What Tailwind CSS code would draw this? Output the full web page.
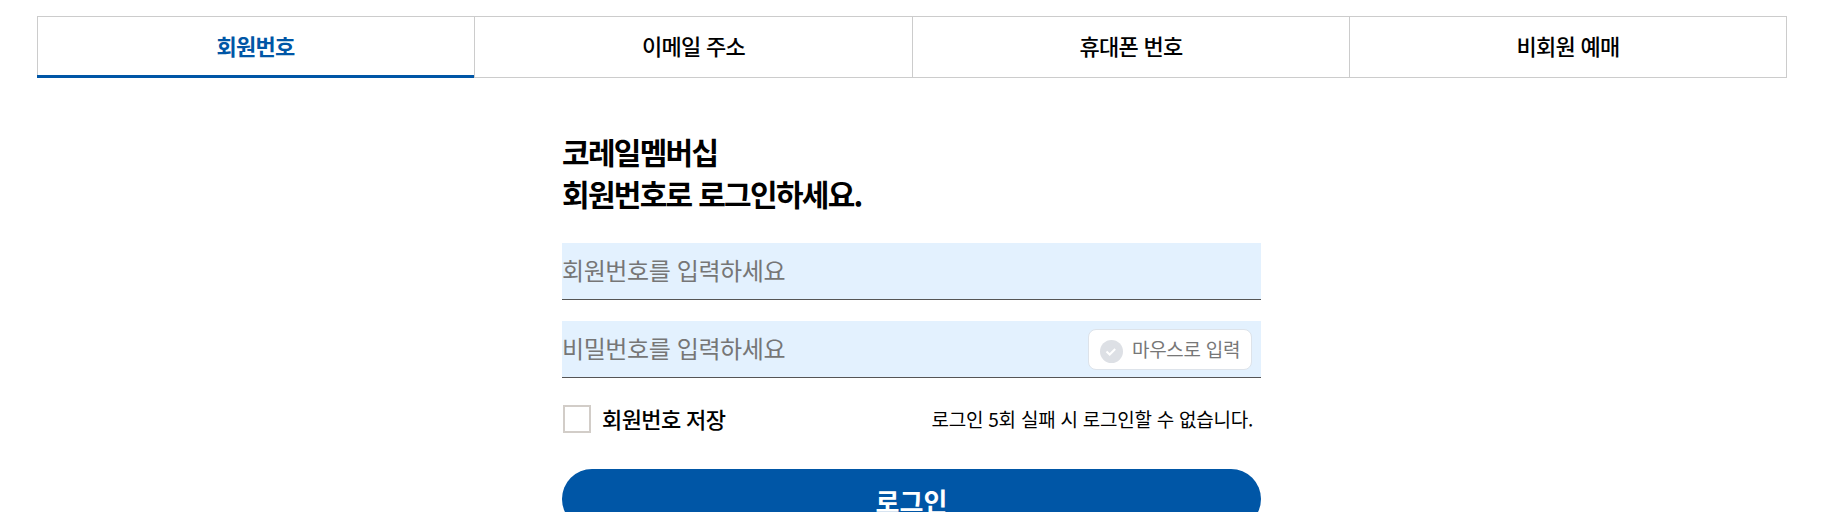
<!DOCTYPE html>
<html lang="ko">
  <head>
    <meta charset="UTF-8" />
    <title>로그인</title>
    <script src="https://cdn.jsdelivr.net/npm/@tailwindcss/browser@4"></script>
  </head>
  <body class="bg-white text-black font-['Noto_Sans_CJK_KR',sans-serif] overflow-hidden">
    <div class="w-[1829px] h-[512px] overflow-hidden pl-[37px] pr-[42px] pt-4">
      <!-- tabs -->
      <ul class="grid grid-cols-[436px_438px_437px_1fr] h-[62px] border border-[#cccccc] text-[22px] tracking-[-0.7px] font-medium">
        <li class="relative flex items-center justify-center pb-[4px] text-[#0056a6] font-bold -ml-px">
          회원번호
          <span class="absolute left-0 right-0 bottom-[-1px] h-[3px] bg-[#0056a6]"></span>
        </li>
        <li class="flex items-center justify-center pb-[4px] border-l border-[#cccccc]">이메일 주소</li>
        <li class="flex items-center justify-center pb-[4px] border-l border-[#cccccc]">휴대폰 번호</li>
        <li class="flex items-center justify-center pb-[4px] border-l border-[#cccccc]">비회원 예매</li>
      </ul>

      <!-- login form -->
      <div class="w-[699px] ml-[525px] mt-[52px]">
        <h2 class="text-[30px] leading-[42px] font-bold tracking-[-1.7px]">코레일멤버십<br />회원번호로 로그인하세요.</h2>

        <div class="mt-[29px] h-[57px] flex items-center pb-[3px] bg-[#e3f1fe] border-b border-[#555555] text-[24px] tracking-[-0.4px] text-[#767676]">
          회원번호를 입력하세요
        </div>

        <div class="mt-[21px] h-[57px] flex items-center justify-between pr-[9px] bg-[#e3f1fe] border-b border-[#555555] text-[24px] tracking-[-0.4px] text-[#767676]">
          <span class="pb-[3px]">비밀번호를 입력하세요</span>
          <button class="h-[41px] w-[164px] mt-px flex items-center gap-[9px] pl-[11px] bg-white border border-[#dde3ea] rounded-lg text-[19px] tracking-[-0.3px] text-[#777777]">
            <svg class="mt-[4px]" width="23" height="23" viewBox="0 0 23 23">
              <circle cx="11.5" cy="11.5" r="11.5" fill="#dde0e5" />
              <path d="M6.5 11.5l3.2 3 5.5-5.5" fill="none" stroke="#ffffff" stroke-width="2" />
            </svg>
            <span class="pb-[1px]">마우스로 입력</span>
          </button>
        </div>

        <div class="mt-[27px] h-[28px] flex items-center justify-between pr-[8px]">
          <label class="flex items-center gap-[11px] ml-px text-[22px] tracking-[-0.6px] font-medium">
            <span class="w-[28px] h-[28px] border-2 border-[#d2cdc8] bg-white"></span>
            <span class="pb-[2px]">회원번호 저장</span>
          </label>
          <p class="text-[19px] tracking-[-0.25px]">로그인 5회 실패 시 로그인할 수 없습니다.</p>
        </div>

        <button class="mt-[36px] w-full h-[60px] flex items-center justify-center pt-[2px] rounded-[30px] bg-[#0056a6] text-white text-[26px] font-bold">
          로그인
        </button>
      </div>
    </div>
  </body>
</html>
